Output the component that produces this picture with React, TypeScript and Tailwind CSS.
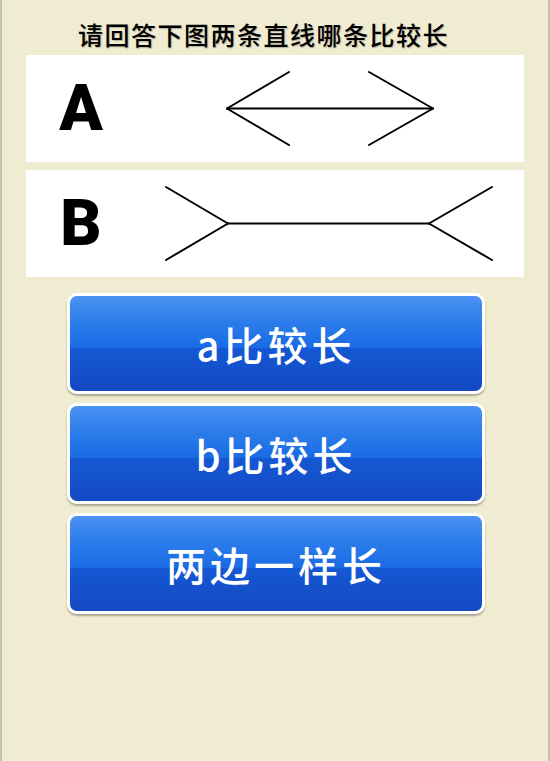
const cjk = "font-['Noto_Sans_CJK_SC','Noto_Sans',sans-serif]";

function LinePanel({ letter, children }: { letter: string; children: React.ReactNode }) {
  return (
    <div className="ml-[24px] flex h-[107px] w-[498px] items-center bg-white">
      <span className="w-[110px] text-center font-['Roboto',sans-serif] text-[64px] font-black leading-none text-black">
        {letter}
      </span>
      <svg className="ml-[20px]" width="360" height="107" viewBox="0 0 360 107">
        <g stroke="#000" strokeWidth="2" fill="none" strokeLinecap="round">
          {children}
        </g>
      </svg>
    </div>
  );
}

function AnswerButton({ label }: { label: string }) {
  return (
    <button className="ml-[65px] block h-[101px] w-[418px] rounded-[10px] border-[3px] border-white p-0 shadow-[0_2px_2px_rgba(0,0,0,0.3)]">
      <div className="flex h-full w-full items-center justify-center rounded-[7px] bg-[linear-gradient(to_bottom,#4b92f2_0%,#2b7cea_28%,#1a6be4_55%,#1558d3_55%,#1449c3_100%)] pt-[1px]">
        <span className={`${cjk} text-[40px] font-medium tracking-[4px] text-white`}>{label}</span>
      </div>
    </button>
  );
}

export default function App() {
  return (
    <main className="min-h-[761px] w-[550px] border-x-2 border-[#c4c2a8] bg-[#f0ecd2]">
      {/* Question */}
      <div className="pl-[76px] pt-[19px] pb-[6px]">
        <h1
          className={`${cjk} text-[25px] font-medium leading-[30px] tracking-[1.5px] text-black [text-shadow:1px_1px_1px_rgba(0,0,0,0.25)]`}
        >
          请回答下图两条直线哪条比较长
        </h1>
      </div>

      {/* Line figures */}
      <div className="flex flex-col gap-[8px]">
        <LinePanel letter="A">
          <line x1="71" y1="53.5" x2="277" y2="53.5" />
          <line x1="71" y1="53.5" x2="133" y2="17" />
          <line x1="71" y1="53.5" x2="133" y2="90" />
          <line x1="277" y1="53.5" x2="213" y2="17" />
          <line x1="277" y1="53.5" x2="213" y2="90" />
        </LinePanel>
        <LinePanel letter="B">
          <line x1="72" y1="53.5" x2="273" y2="53.5" />
          <line x1="72" y1="53.5" x2="10" y2="17" />
          <line x1="72" y1="53.5" x2="10" y2="90" />
          <line x1="273" y1="53.5" x2="336" y2="17" />
          <line x1="273" y1="53.5" x2="336" y2="90" />
        </LinePanel>
      </div>

      {/* Answers */}
      <div className="mt-[16px] flex flex-col gap-[9px]">
        <AnswerButton label="a比较长" />
        <AnswerButton label="b比较长" />
        <AnswerButton label="两边一样长" />
      </div>
    </main>
  );
}
